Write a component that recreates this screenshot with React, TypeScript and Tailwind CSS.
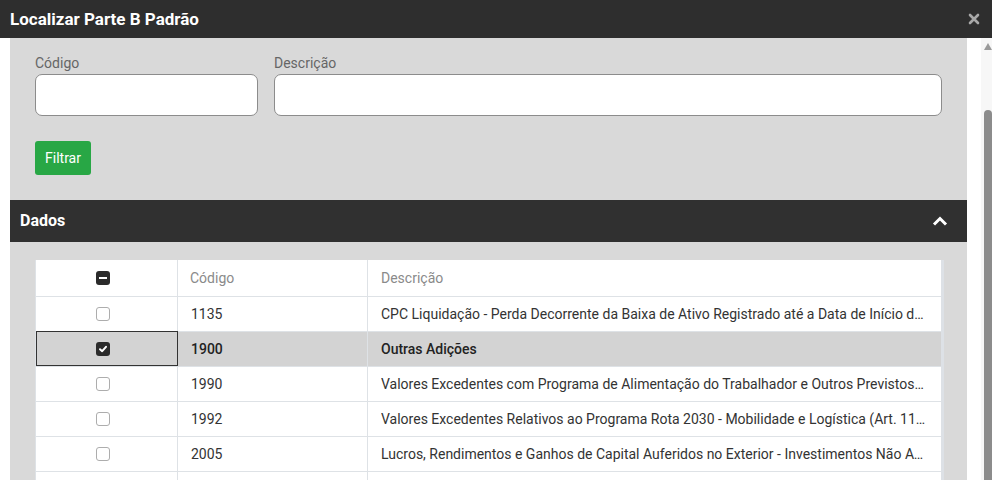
import React from "react";

const rows = [
  { code: "1135", desc: "CPC Liquidação - Perda Decorrente da Baixa de Ativo Registrado até a Data de Início da Liquidação", sel: false },
  { code: "1900", desc: "Outras Adições", sel: true },
  { code: "1990", desc: "Valores Excedentes com Programa de Alimentação do Trabalhador e Outros Previstos em Lei", sel: false },
  { code: "1992", desc: "Valores Excedentes Relativos ao Programa Rota 2030 - Mobilidade e Logística (Art. 11, Lei 13.755/2018)", sel: false },
  { code: "2005", desc: "Lucros, Rendimentos e Ganhos de Capital Auferidos no Exterior - Investimentos Não Avaliados", sel: false },
  { code: "2010", desc: "Ajustes Decorrentes de Métodos e Critérios Contábeis", sel: false },
];

function Box({ checked }: { checked: boolean }) {
  if (checked)
    return (
      <span className="w-[14px] h-[14px] rounded-[3px] bg-[#2b2b2b] flex items-center justify-center">
        <svg width="10" height="10" viewBox="0 0 10 10">
          <polyline points="2,5.2 4.2,7.2 8,2.8" fill="none" stroke="#fff" strokeWidth="2" strokeLinecap="round" strokeLinejoin="round" />
        </svg>
      </span>
    );
  return <span className="w-[14px] h-[14px] rounded-[3px] bg-white border border-[#adadad]" />;
}

export default function App() {
  return (
    <div className="w-[992px] h-[480px] overflow-hidden bg-white flex flex-col font-['Roboto',sans-serif]">
      <div className="h-[38px] shrink-0 bg-[#2e2e2e] flex items-center justify-between pl-[10px] pr-[12px]">
        <span className="text-white font-bold text-[17px] leading-none">Localizar Parte B Padrão</span>
        <svg width="12" height="12" viewBox="0 0 12 12">
          <path d="M2 2 L10 10 M10 2 L2 10" stroke="#a8a8a8" strokeWidth="2.6" strokeLinecap="round" />
        </svg>
      </div>
      <div className="flex flex-1 min-h-0">
        <div className="w-[10px] shrink-0 bg-white" />
        <div className="w-[957px] shrink-0 bg-[#d9d9d9] flex flex-col overflow-hidden">
          <div className="shrink-0 px-[25px] pt-[15px]">
            <div className="flex gap-[16px]">
              <div className="w-[223px] flex flex-col">
                <label className="text-[14px] leading-[20px] text-[#666] mb-[1px]">Código</label>
                <div className="h-[42px] bg-white border border-[#8c8c8c] rounded-[7px]" />
              </div>
              <div className="flex-1 flex flex-col">
                <label className="text-[14px] leading-[20px] text-[#666] mb-[1px]">Descrição</label>
                <div className="h-[42px] bg-white border border-[#8c8c8c] rounded-[7px]" />
              </div>
            </div>
            <button className="mt-[25px] h-[34px] w-[56px] rounded-[3px] bg-[#28a745] text-white text-[14px] flex items-center justify-center">
              Filtrar
            </button>
          </div>
          <div className="shrink-0 mt-[25px] h-[42px] bg-[#303030] flex items-center justify-between pl-[10px] pr-[19px]">
            <span className="text-white font-bold text-[16px]">Dados</span>
            <svg width="16" height="12" viewBox="0 0 16 12">
              <polyline points="2,9.5 8,3.5 14,9.5" fill="none" stroke="#fff" strokeWidth="3" strokeLinejoin="miter" />
            </svg>
          </div>
          <div className="shrink-0 pl-[25px] pt-[18px] flex">
            <div className="w-[909px] bg-white border-l border-[#dee2e6] border-r-[3px] border-r-[#dde1e6]">
              <div className="grid grid-cols-[142px_190px_1fr] h-[37px] border-b border-[#dee2e6] text-[14px] text-[#8a8a8a]">
                <div className="flex items-center justify-center pr-[8px] border-r border-[#dee2e6]">
                  <span className="w-[14px] h-[14px] rounded-[3px] bg-[#2b2b2b] flex items-center justify-center">
                    <span className="w-[8px] h-[2px] bg-white" />
                  </span>
                </div>
                <div className="flex items-center px-[12px] border-r border-[#dee2e6]">Código</div>
                <div className="flex items-center px-[13px]">Descrição</div>
              </div>
              {rows.map((r) => (
                <div
                  key={r.code}
                  className={
                    "grid grid-cols-[142px_190px_1fr] h-[35px] border-b border-[#dee2e6] text-[14px] " +
                    (r.sel ? "bg-[#d3d3d3] text-[#222] font-medium" : "bg-white text-[#333]")
                  }
                >
                  <div
                    className={
                      "flex items-center justify-center pr-[8px] " +
                      (r.sel ? "border border-[#333] -mt-[1px] h-[35px]" : "border-r border-[#dee2e6]")
                    }
                  >
                    <Box checked={r.sel} />
                  </div>
                  <div className="flex items-center px-[13px] border-r border-[#dee2e6]">{r.code}</div>
                  <div className="flex items-center pl-[13px] pr-[14px] min-w-0">
                    <span className="truncate">{r.desc}</span>
                  </div>
                </div>
              ))}
            </div>
          </div>
        </div>
        <div className="w-[14px] shrink-0 bg-white" />
        <div className="flex-1 bg-[#f7f7f7] relative">
          <svg className="absolute left-[3px] top-[5px]" width="8" height="7" viewBox="0 0 8 7">
            <polygon points="4,0 8,7 0,7" fill="#9a9a9a" />
          </svg>
          <div className="absolute left-[3px] right-0 top-[72px] bottom-0 bg-[#8c8c8c] rounded-t-[4px]" />
        </div>
      </div>
    </div>
  );
}
